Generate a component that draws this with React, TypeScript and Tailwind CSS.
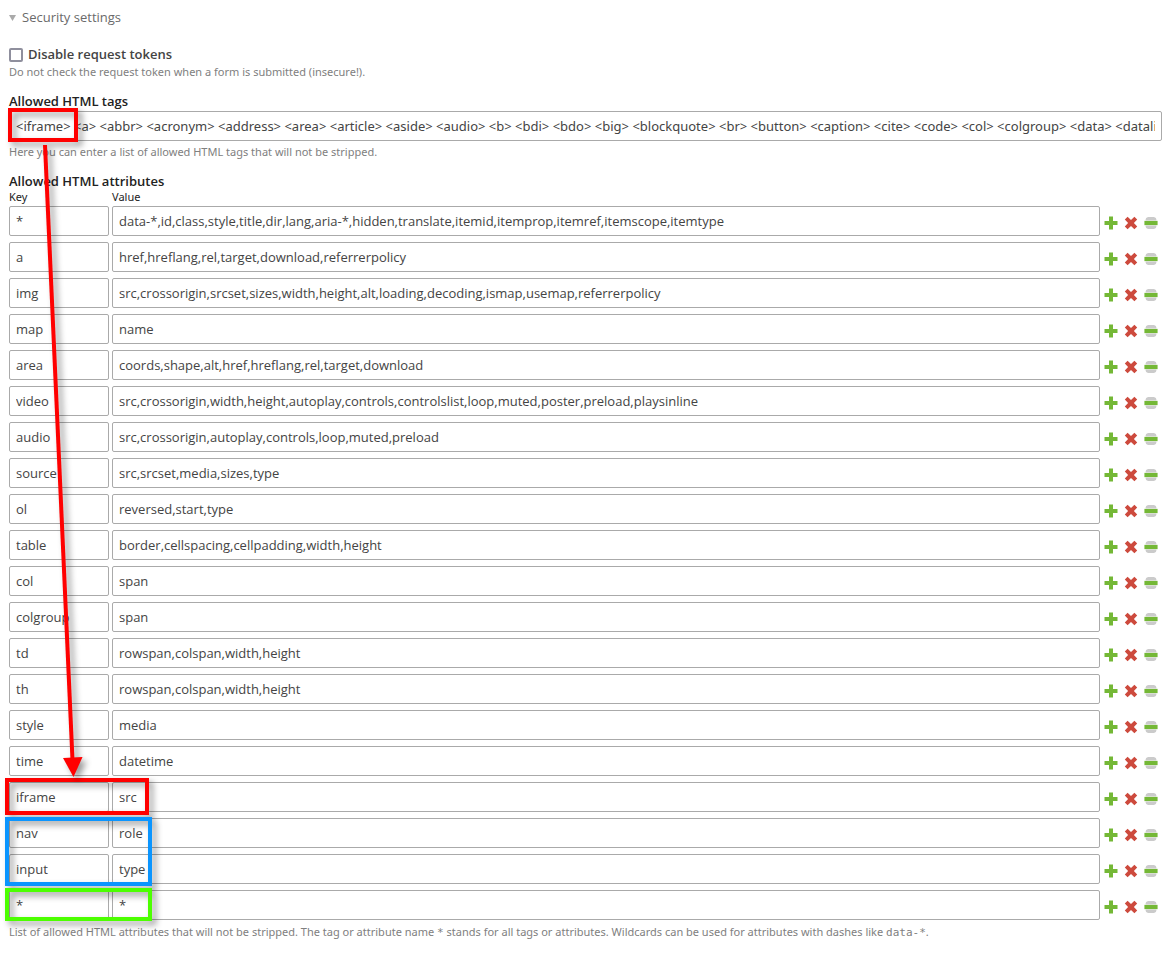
import React from 'react';

type Attribute = { id: number; key: string; value: string };

const ATTRIBUTES: Attribute[] = [
  ['*', 'data-*,id,class,style,title,dir,lang,aria-*,hidden,translate,itemid,itemprop,itemref,itemscope,itemtype'],
  ['a', 'href,hreflang,rel,target,download,referrerpolicy'],
  ['img', 'src,crossorigin,srcset,sizes,width,height,alt,loading,decoding,ismap,usemap,referrerpolicy'],
  ['map', 'name'],
  ['area', 'coords,shape,alt,href,hreflang,rel,target,download'],
  ['video', 'src,crossorigin,width,height,autoplay,controls,controlslist,loop,muted,poster,preload,playsinline'],
  ['audio', 'src,crossorigin,autoplay,controls,loop,muted,preload'],
  ['source', 'src,srcset,media,sizes,type'],
  ['ol', 'reversed,start,type'],
  ['table', 'border,cellspacing,cellpadding,width,height'],
  ['col', 'span'],
  ['colgroup', 'span'],
  ['td', 'rowspan,colspan,width,height'],
  ['th', 'rowspan,colspan,width,height'],
  ['style', 'media'],
  ['time', 'datetime'],
  ['iframe', 'src'],
  ['nav', 'role'],
  ['input', 'type'],
  ['*', '*'],
].map(([key, value], id) => ({ id, key, value }));

const TAGS =
  '<iframe> <a> <abbr> <acronym> <address> <area> <article> <aside> <audio> <b> <bdi> <bdo> <big> <blockquote> <br> <button> <caption> <cite> <code> <col> <colgroup> <data> <datalist> <dd> <del> <dfn> <div> <dl> <dt> <em>';

const FIELD =
  'block h-[30px] w-full rounded-xs border border-[#aaaaaa] bg-white px-1.5 text-[13px] text-[#444444] outline-none';

const HINT = "font-['Noto_Sans',sans-serif] text-[11px] leading-4 text-[#808080]";

function PlusIcon() {
  return (
    <svg viewBox="0 0 14 14" className="size-3.5" aria-hidden="true">
      <path d="M5 .5h4V5h4.500v4H9v4.500H5V9H.5V5H5z" fill="#74b836" />
    </svg>
  );
}

function CrossIcon() {
  return (
    <svg viewBox="0 0 14 14" className="size-3.5" aria-hidden="true">
      <path
        d="M3.600 .8 7 4.100 10.400 .8 13.200 3.600 9.900 7 13.200 10.400 10.400 13.200 7 9.900 3.600 13.200 .8 10.400 4.100 7 .8 3.600z"
        fill="#cd4a3d"
      />
    </svg>
  );
}

function DragIcon() {
  return (
    <svg viewBox="0 0 14 14" className="size-3.5" aria-hidden="true">
      <path d="M4 1h6q2.500 .5 2.500 3v6q0 2.500-2.500 3H4q-2.500-.5-2.500-3V4q0-2.500 2.500-3z" fill="#cbcbcb" />
      <path d="M0 4.500h14v5H0z" fill="#e6f2da" />
      <path d="M.5 5h13v4H.5z" fill="#74b836" />
    </svg>
  );
}

function AttributeRow({ attribute }: { attribute: Attribute }) {
  return (
    <tr>
      <td className="pr-[3px] pb-1.5">
        <input aria-label="Key" className={`${FIELD} font-['Open_Sans',sans-serif]`} defaultValue={attribute.key} />
      </td>
      <td className="pr-[3px] pb-1.5">
        <input aria-label="Value" className={`${FIELD} font-['Open_Sans',sans-serif]`} defaultValue={attribute.value} />
      </td>
      <td className="pb-0.5">
        <div className="flex gap-1.5 pl-px">
          <button type="button" aria-label="Duplicate row"><PlusIcon /></button>
          <button type="button" aria-label="Delete row"><CrossIcon /></button>
          <button type="button" aria-label="Move row"><DragIcon /></button>
        </div>
      </td>
    </tr>
  );
}

function Annotations() {
  const frame = 'absolute border-4 drop-shadow-[4px_4px_3px_rgba(0,0,0,0.4)]';
  return (
    <div className="pointer-events-none absolute inset-0" aria-hidden="true">
      <div className={`${frame} top-[108px] left-2 h-[34px] w-[70px] border-[#ff0000]`} />
      <div className={`${frame} top-[778px] left-[5px] h-[37px] w-36 border-[#ff0000]`} />
      <div className={`${frame} top-[817px] left-[5px] h-[69px] w-[147px] border-[#0a95ff]`} />
      <div className={`${frame} top-[888px] left-[5px] h-[33px] w-[147px] border-[#4cff00]`} />
      <svg
        viewBox="0 0 60 640"
        className="absolute top-[140px] left-[35px] h-[640px] w-[60px] drop-shadow-[4px_4px_3px_rgba(0,0,0,0.4)]"
      >
        <path d="M10 5 37.500 620" stroke="#ff0000" strokeWidth="4" />
        <path d="M28 618 47.500 617 38.500 637z" fill="#ff0000" />
      </svg>
    </div>
  );
}

export default function App() {
  return (
    <main className="relative min-h-screen bg-white pt-2 pr-2.5 pl-[9px] font-['Open_Sans',sans-serif] text-[13px] text-[#222222]">
      <button type="button" className="flex h-5 items-center gap-1.5 text-[#6a6a6a]">
        <svg viewBox="0 0 7 6" className="h-1.5 w-[7px]" aria-hidden="true">
          <path d="M0 0h7L3.500 6z" fill="#aaaaaa" />
        </svg>
        Security settings
      </button>

      <section className="mt-[17px]">
        <label className="flex h-[19px] items-center gap-[5px] font-semibold text-[#444444]">
          <input
            type="checkbox"
            className="size-3.5 appearance-none rounded-xs border-2 border-[#8f8f9d] bg-white checked:bg-[#8f8f9d]"
          />
          Disable request tokens
        </label>
        <p className={HINT}>
          Do not check the request token when a form is submitted (insecure!).
        </p>
      </section>

      <section className="mt-[11px]">
        <label htmlFor="allowed-tags" className="block h-5 leading-5 font-semibold">Allowed HTML tags</label>
        <input id="allowed-tags" className={`${FIELD} font-['Noto_Sans',sans-serif]`} defaultValue={TAGS} />
        <p className={`mt-[3px] ${HINT}`}>
          Here you can enter a list of allowed HTML tags that will not be stripped.
        </p>
      </section>

      <section className="mt-3">
        <h3 className="h-[17px] leading-[19px] font-semibold">Allowed HTML attributes</h3>
        <table className="w-full table-fixed border-collapse">
          <colgroup>
            <col className="w-[103px]" />
            <col />
            <col className="w-[59px]" />
          </colgroup>
          <thead>
            <tr className="h-[17px] text-left align-top font-['Noto_Sans',sans-serif] text-[11px] leading-4">
              <th className="pb-px font-normal">Key</th>
              <th className="pb-px font-normal">Value</th>
              <td />
            </tr>
          </thead>
          <tbody>
            {ATTRIBUTES.map((attribute) => (
              <AttributeRow key={attribute.id} attribute={attribute} />
            ))}
          </tbody>
        </table>
        <p className={`-mt-0.5 ${HINT}`}>
          List of allowed HTML attributes that will not be stripped. The tag or attribute name{' '}
          <code className="font-['DejaVu_Sans_Mono',monospace]">*</code> stands for all tags or attributes.
          Wildcards can be used for attributes with dashes like{' '}
          <code className="font-['DejaVu_Sans_Mono',monospace]">data-*</code>.
        </p>
      </section>

      <Annotations />
    </main>
  );
}
